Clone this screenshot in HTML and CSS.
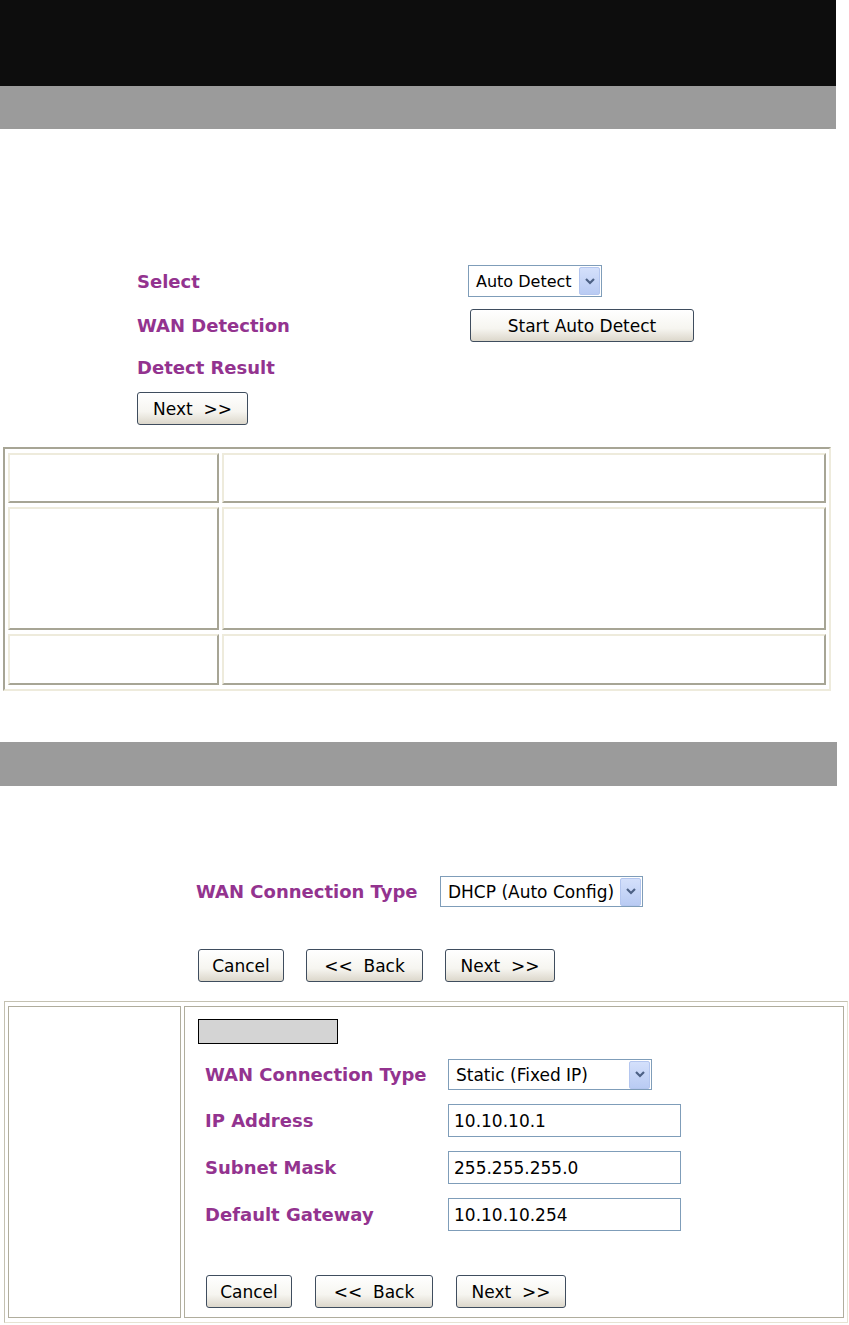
FILE: index.html
```html
<!DOCTYPE html>
<html lang="en">
<head>
  <meta charset="UTF-8" />
  <title>Setup Wizard - WAN</title>
  <link rel="stylesheet" href="styles.css">
</head>
<body>
  <div class="title-band"></div>
  <div class="section-bar"></div>

  <div class="detect-form">
    <div class="form-row row-select">
      <span class="label">Select</span>
      <div class="select-box select-auto">
        <span>Auto Detect</span>
        <span class="select-btn"><svg width="10" height="7" viewBox="0 0 10 7"><path d="M1 1 L5 5 L9 1" fill="none" stroke="#4d6185" stroke-width="2.2"/></svg></span>
      </div>
    </div>
    <div class="form-row row-detect">
      <span class="label">WAN Detection</span>
      <button class="btn btn-start">Start Auto Detect</button>
    </div>
    <div class="form-row row-result">
      <span class="label">Detect Result</span>
    </div>
    <div class="form-row row-next">
      <button class="btn btn-next">Next&nbsp; &gt;&gt;</button>
    </div>
  </div>

  <table class="desc-table">
    <tr class="row-short"><td class="col-term"></td><td></td></tr>
    <tr class="row-tall"><td class="col-term"></td><td></td></tr>
    <tr class="row-last"><td class="col-term"></td><td></td></tr>
  </table>

  <div class="section-bar section-bar-2"></div>

  <div class="conn-form">
    <div class="form-row conn-row">
      <span class="label">WAN Connection Type</span>
      <div class="select-box select-dhcp">
        <span>DHCP (Auto Config)</span>
        <span class="select-btn"><svg width="10" height="7" viewBox="0 0 10 7"><path d="M1 1 L5 5 L9 1" fill="none" stroke="#4d6185" stroke-width="2.2"/></svg></span>
      </div>
    </div>
    <div class="button-row">
      <button class="btn btn-cancel">Cancel</button>
      <button class="btn btn-back">&lt;&lt;&nbsp; Back</button>
      <button class="btn btn-next">Next&nbsp; &gt;&gt;</button>
    </div>
  </div>

  <table class="example-table">
    <tr>
      <td class="col-term"></td>
      <td class="example-cell">
        <div class="tab-box"></div>
        <div class="field-list">
          <div class="form-row field-row row-type">
            <span class="label">WAN Connection Type</span>
            <div class="select-box select-static">
              <span>Static (Fixed IP)</span>
              <span class="select-btn"><svg width="10" height="7" viewBox="0 0 10 7"><path d="M1 1 L5 5 L9 1" fill="none" stroke="#4d6185" stroke-width="2.2"/></svg></span>
            </div>
          </div>
          <div class="form-row field-row">
            <span class="label">IP Address</span>
            <input class="field-input" type="text" value="10.10.10.1">
          </div>
          <div class="form-row field-row">
            <span class="label">Subnet Mask</span>
            <input class="field-input" type="text" value="255.255.255.0">
          </div>
          <div class="form-row field-row">
            <span class="label">Default Gateway</span>
            <input class="field-input" type="text" value="10.10.10.254">
          </div>
        </div>
        <div class="button-row button-row-inner">
          <button class="btn btn-cancel">Cancel</button>
          <button class="btn btn-back btn-back-wide">&lt;&lt;&nbsp; Back</button>
          <button class="btn btn-next">Next&nbsp; &gt;&gt;</button>
        </div>
      </td>
    </tr>
  </table>
</body>
</html>
```

FILE: styles.css
```css
:root {
  --label: #93338f;
  --band: #0d0d0d;
  --bar: #9b9b9b;
  --edge-dark: #a7a595;
  --edge-light: #eeebdc;
  --field-border: #7f9db9;
}

body {
  margin: 0;
  background: #fff;
  color: #000;
  font-family: "DejaVu Sans", Verdana, sans-serif;
}

.title-band {
  width: 836px;
  height: 86px;
  background: var(--band);
}

.section-bar {
  width: 836px;
  height: 43px;
  background: var(--bar);
}

.section-bar-2 {
  width: 837px;
  height: 44px;
  margin-top: 51px;
}

.form-row {
  display: flex;
  align-items: center;
}

.label {
  font-weight: bold;
  font-size: 18px;
  color: var(--label);
  white-space: nowrap;
}

.detect-form {
  margin-top: 136px;
  padding-left: 137px;
}

.detect-form .label {
  width: 331px;
}

.row-select {
  height: 32px;
}

.row-detect {
  height: 33px;
  margin-top: 12px;
}

.row-detect .btn {
  margin-left: 2px;
}

.row-result {
  height: 24px;
  margin-top: 13px;
}

.row-next {
  margin-top: 13px;
}

.select-box {
  display: flex;
  align-items: center;
  justify-content: space-between;
  box-sizing: border-box;
  height: 32px;
  padding: 0 1px 0 7px;
  border: 1px solid var(--field-border);
  background: #fff;
  font-size: 16px;
}

.select-btn {
  display: flex;
  align-items: center;
  justify-content: center;
  width: 19px;
  height: 26px;
  border: 1px solid #b4c6ef;
  border-radius: 2px;
  background: linear-gradient(#d4e0fb, #b9cbf3);
}

.select-auto {
  width: 134px;
}

.select-dhcp {
  width: 203px;
  height: 31px;
  font-size: 17px;
}

.select-static {
  width: 204px;
  height: 31px;
  font-size: 17px;
}

.btn {
  height: 33px;
  box-sizing: border-box;
  padding: 0;
  border: 1px solid #3f4d5e;
  border-radius: 3px;
  background: linear-gradient(#ffffff, #f6f5f0 60%, #dcd7cb);
  color: #000;
  font-family: inherit;
  font-size: 17px;
  white-space: nowrap;
}

.btn-start {
  width: 224px;
}

.btn-next {
  width: 111px;
}

.btn-cancel {
  width: 86px;
}

.btn-back {
  width: 117px;
}

.btn-back-wide {
  width: 118px;
}

.desc-table {
  box-sizing: border-box;
  width: 828px;
  height: 244px;
  margin: 22px 0 0 3px;
  border-collapse: separate;
  border-spacing: 3px 4px;
  border: 2px solid;
  border-color: var(--edge-dark) var(--edge-light) var(--edge-light) var(--edge-dark);
}

.desc-table td {
  box-sizing: border-box;
  padding: 0;
  border: 2px solid;
  border-color: var(--edge-light) var(--edge-dark) var(--edge-dark) var(--edge-light);
}

.desc-table .col-term {
  width: 211px;
}

.row-short td {
  height: 50px;
}

.row-tall td {
  height: 123px;
}

.row-last td {
  height: 51px;
}

.conn-form {
  margin-top: 90px;
  padding-left: 196px;
}

.conn-form .label {
  width: 244px;
}

.conn-row {
  height: 31px;
}

.button-row {
  display: flex;
  gap: 22px;
  margin-top: 42px;
  padding-left: 2px;
}

.button-row .btn-next {
  width: 110px;
}

.example-table {
  box-sizing: border-box;
  width: 844px;
  height: 322px;
  margin: 19px 0 0 4px;
  border-collapse: separate;
  border-spacing: 3px 4px;
  border: 1px solid;
  border-color: #c4c1b1 #e6e3d3 #e6e3d3 #c4c1b1;
}

.example-table td {
  box-sizing: border-box;
  padding: 0;
  border: 1px solid #b0ad9d;
  vertical-align: top;
}

.example-table .col-term {
  width: 173px;
}

.example-cell {
  padding: 12px 0 0 13px !important;
}

.tab-box {
  box-sizing: border-box;
  width: 140px;
  height: 25px;
  background: #d4d4d4;
  border: 1px solid #000;
}

.field-list {
  display: flex;
  flex-direction: column;
  gap: 14px;
  margin-top: 15px;
  padding-left: 7px;
}

.field-list .label {
  width: 243px;
}

.field-row {
  height: 33px;
}

.row-type {
  height: 31px;
}

.field-input {
  box-sizing: border-box;
  width: 233px;
  height: 33px;
  margin: 0;
  padding: 0 5px;
  border: 1px solid var(--field-border);
  background: #fff;
  color: #000;
  font-family: inherit;
  font-size: 17px;
}

.button-row-inner {
  gap: 23px;
  margin-top: 44px;
  padding-left: 8px;
}
```
